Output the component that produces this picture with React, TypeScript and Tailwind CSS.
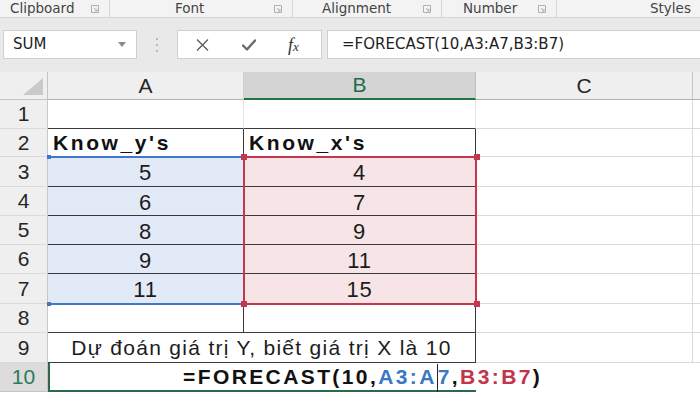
import React from "react";

const UI = { fontFamily: '"DejaVu Sans", "Open Sans", sans-serif' };
const CELL = { fontFamily: '"Liberation Sans", Arial, sans-serif' };

function Launcher() {
  return (
    <svg width="8" height="8" viewBox="0 0 8 8" className="shrink-0">
      <path d="M0.5 0.5H7.5V7.5H0.5Z" fill="none" stroke="#b0b0b0" strokeWidth="1" />
      <path d="M3 3L6 6M6 3.8V6H3.8" fill="none" stroke="#b0b0b0" strokeWidth="1" />
    </svg>
  );
}

function Group({ label, width, ml, launcher = true }: { label: string; width: number; ml: number; launcher?: boolean }) {
  return (
    <div className="flex items-center h-full border-r border-[#d6d6d6]" style={{ width }}>
      <span style={{ marginLeft: ml }} className="text-[13.5px] text-[#444] leading-none">
        {label}
      </span>
      {launcher && (
        <div className="ml-auto mr-[10px] flex items-center">
          <Launcher />
        </div>
      )}
    </div>
  );
}

export default function App() {
  const rowH = [29, 28, 30, 29, 29, 29, 30, 29, 30, 29];
  const ys = ["5", "6", "8", "9", "11"];
  const xs = ["4", "7", "9", "11", "15"];
  const num = "text-[22px] text-[#1c1c1c] tracking-[0.8px]";

  const light = "border-r border-b border-[#d9d9d9]";

  return (
    <div className="w-[700px] h-[394px] overflow-hidden bg-white relative" style={UI}>
      {/* ribbon label strip */}
      <div className="h-[18px] flex bg-[#f3f3f3] border-b border-[#d4d4d4] overflow-hidden">
        <Group label="Clipboard" width={110} ml={10} />
        <Group label="Font" width={183} ml={65} />
        <Group label="Alignment" width={149} ml={29} />
        <Group label="Number" width={115} ml={21} />
        <div className="flex items-center h-full flex-1">
          <span className="ml-[93px] text-[13.5px] text-[#444] leading-none">Styles</span>
        </div>
      </div>

      {/* formula band */}
      <div className="h-[54px] bg-[#e9e9e9] flex items-start pt-[12px]">
        <div className="ml-[3px] w-[134px] h-[29px] bg-white border border-[#cfcfcf] flex items-center">
          <span className="ml-[9px] text-[15px] text-[#222]">SUM</span>
          <svg width="8" height="5" viewBox="0 0 8 5" className="ml-auto mr-[10px]">
            <path d="M0 0H8L4 5Z" fill="#8a8a8a" />
          </svg>
        </div>
        <div className="w-[40px] h-[29px] flex flex-col items-center justify-center gap-[4px]">
          <div className="w-[2px] h-[2px] bg-[#b8b8b8]" />
          <div className="w-[2px] h-[2px] bg-[#b8b8b8]" />
          <div className="w-[2px] h-[2px] bg-[#b8b8b8]" />
        </div>
        <div className="w-[145px] h-[29px] bg-white border border-[#cfcfcf] flex items-center">
          <svg width="13" height="12" viewBox="0 0 13 12" className="ml-[18px]">
            <path d="M1 0.5L12 11.5M12 0.5L1 11.5" stroke="#5a5a5a" strokeWidth="1.3" fill="none" />
          </svg>
          <svg width="14" height="12" viewBox="0 0 14 12" className="ml-[33px]">
            <path d="M1 6.5L5 10.5L13 1.5" stroke="#6a6a6a" strokeWidth="2.4" fill="none" strokeLinecap="round" strokeLinejoin="round" />
          </svg>
          <span
            className="ml-[32px] text-[18px] italic text-[#333] leading-none"
            style={{ fontFamily: '"Liberation Serif", "Times New Roman", serif' }}
          >
            f<span className="text-[13px]">x</span>
          </span>
        </div>
        <div className="ml-[5px] flex-1 h-[29px] bg-white border border-[#cfcfcf] border-r-0 flex items-center">
          <span className="ml-[14px] text-[15px] text-[#1e1e1e] whitespace-nowrap">=FORECAST(10,A3:A7,B3:B7)</span>
        </div>
      </div>

      {/* grid */}
      <div
        className="relative grid grid-cols-[48px_196px_232px_217px_1fr] bg-white"
        style={{ ...CELL, gridTemplateRows: `28px ${rowH.map((h) => h + "px").join(" ")}` }}
      >
        {/* header row */}
        <div className="bg-[#efefef] border-r border-b border-[#c4c4c4] relative">
          <svg width="20" height="17" viewBox="0 0 20 17" className="absolute right-[4px] bottom-[4px]">
            <path d="M20 0V17H0Z" fill="#c9c9c9" />
          </svg>
        </div>
        <div className="bg-[#efefef] border-r border-b border-[#b0b0b0] border-r-[#d0d0d0] flex items-center justify-center text-[21px] text-[#262626]">A</div>
        <div className="bg-[#d4d4d4] border-r border-[#c0c0c0] border-b-2 border-b-[#217346] flex items-center justify-center text-[21px] text-[#1f6b47]">B</div>
        <div className="bg-[#efefef] border-r border-b border-[#b0b0b0] border-r-[#c4c4c4] flex items-center justify-center text-[21px] text-[#262626]">C</div>
        <div className="bg-[#efefef] border-b border-[#b0b0b0]" />

        {/* rows */}
        {Array.from({ length: 10 }).map((_, i) => {
          const r = i + 1;
          const isSel = r === 10;
          const rowHeader = (
            <div
              key={`h${r}`}
              className={
                isSel
                  ? "bg-[#dcdcdc] border-r border-b border-[#c4c4c4] flex items-center justify-center text-[21px] text-[#2c7a5c]"
                  : "bg-[#efefef] border-r border-b border-[#c8c8c8] border-b-[#dadada] flex items-center justify-center text-[21px] text-[#262626]"
              }
            >
              {r}
            </div>
          );
          const cells: React.ReactNode[] = [];
          if (r === 1) {
            cells.push(<div key="a" className="border-r border-[#e3e3e3] border-b border-b-[#3a3a3a]" />);
            cells.push(<div key="b" className="border-r border-[#e3e3e3] border-b border-b-[#3a3a3a]" />);
          } else if (r === 2) {
            cells.push(
              <div key="a" className="border-r border-[#3a3a3a] flex items-center pl-[5px]">
                <span className="text-[21px] font-bold text-[#111] tracking-[2.6px]">Know_y's</span>
              </div>
            );
            cells.push(
              <div key="b" className="border-r border-[#3a3a3a] flex items-center pl-[5px]">
                <span className="text-[21px] font-bold text-[#111] tracking-[2.6px]">Know_x's</span>
              </div>
            );
          } else if (r >= 3 && r <= 7) {
            cells.push(
              <div key="a" className="bg-[#e1eaf6] border-r border-b border-[#3a3a3a] flex items-center justify-center pt-[2px]">
                <span className={num}>{ys[r - 3]}</span>
              </div>
            );
            cells.push(
              <div key="b" className="bg-[#f6e4e6] border-r border-b border-[#3a3a3a] flex items-center justify-center pt-[2px]">
                <span className={num}>{xs[r - 3]}</span>
              </div>
            );
          } else if (r === 8) {
            cells.push(<div key="a" className="border-r border-b border-[#3a3a3a]" />);
            cells.push(<div key="b" className="border-r border-b border-[#3a3a3a]" />);
          } else if (r === 9) {
            cells.push(
              <div key="ab" className="col-span-2 border-r border-b border-[#3a3a3a] flex items-center justify-center">
                <span className="text-[21px] text-[#1c1c1c] tracking-[1.3px] whitespace-nowrap">
                  Dự đoán giá trị Y, biết giá trị X là 10
                </span>
              </div>
            );
          } else {
            cells.push(
              <div
                key="ab"
                className="col-span-2 relative z-10 bg-white border-l-2 border-b-2 border-[#2a6a4a] flex items-center pl-[133px] overflow-visible"
              >
                <span className="text-[21px] font-bold tracking-[2.4px] whitespace-nowrap text-[#111] leading-none">
                  =FORECAST(10,
                  <span className="text-[#3a78c6]">A3:A</span>
                  <span className="inline-block w-px h-[28px] bg-[#222] align-middle -my-2" />
                  <span className="text-[#3a78c6]">7</span>,
                  <span className="text-[#c23449]">B3:B7</span>)
                </span>
              </div>
            );
          }
          const cCell = isSel ? <div key="c" className="bg-white" /> : <div key="c" className={light} />;
          const dCell = isSel ? <div key="d" className="bg-white" /> : <div key="d" className="border-b border-[#d9d9d9]" />;
          return (
            <React.Fragment key={r}>
              {rowHeader}
              {cells}
              {cCell}
              {dCell}
            </React.Fragment>
          );
        })}

        {/* range highlights (overlays) */}
        <div className="absolute left-[48px] top-[84px] w-[196px] h-[149px] border-t-2 border-b-2 border-[#3f78c8] pointer-events-none" />
        <div className="absolute left-[243px] top-[84px] w-[234px] h-[149px] border-2 border-[#c3374f] pointer-events-none" />
        <div className="absolute left-[47px] top-[83px] w-[4px] h-[4px] bg-[#3f78c8]" />
        <div className="absolute left-[47px] top-[230px] w-[4px] h-[4px] bg-[#3f78c8]" />
        <div className="absolute left-[241px] top-[82px] w-[6px] h-[6px] bg-[#c3374f]" />
        <div className="absolute left-[474px] top-[82px] w-[6px] h-[6px] bg-[#c3374f]" />
        <div className="absolute left-[241px] top-[229px] w-[6px] h-[6px] bg-[#c3374f]" />
        <div className="absolute left-[474px] top-[229px] w-[6px] h-[6px] bg-[#c3374f]" />
      </div>
    </div>
  );
}
